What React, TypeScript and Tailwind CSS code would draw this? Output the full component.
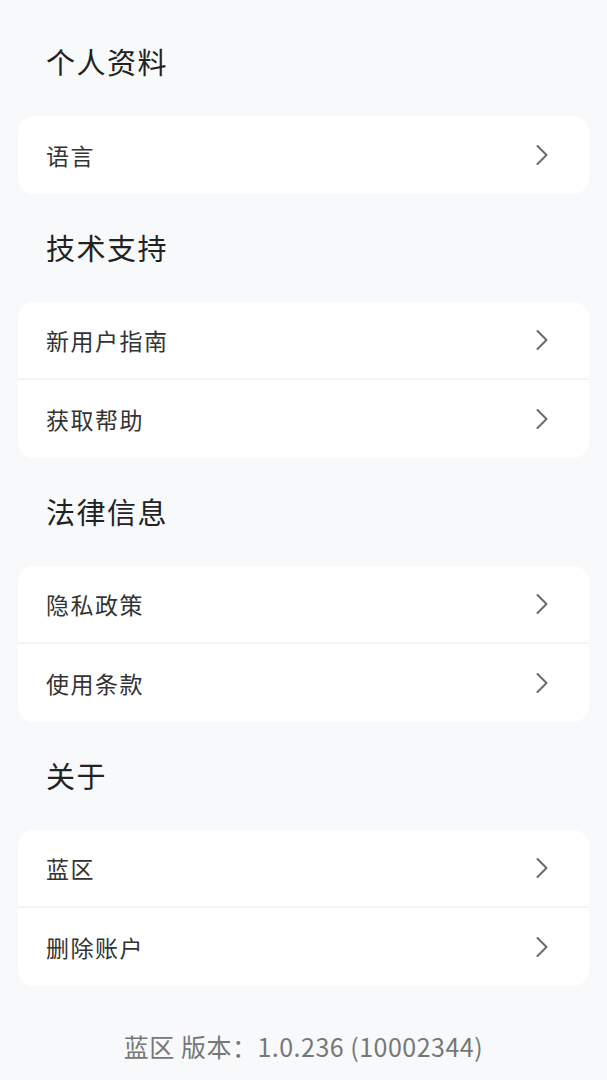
import { ChevronRight } from "lucide-react";

const sections = [
  { title: "个人资料", items: ["语言"] },
  { title: "技术支持", items: ["新用户指南", "获取帮助"] },
  { title: "法律信息", items: ["隐私政策", "使用条款"] },
  { title: "关于", items: ["蓝区", "删除账户"] },
];

const font = {
  fontFamily: '"Noto Sans CJK SC", "Noto Sans", sans-serif',
};

const SettingRow = ({ label }: { label: string }) => (
  <div className="flex h-[78px] items-center justify-between pl-7 pr-[29px]">
    <span className="text-[23px] tracking-[1.5px] text-[#333333]">{label}</span>
    <ChevronRight className="h-9 w-9 text-[#6b6b6b]" strokeWidth={1.4} />
  </div>
);

export default function App() {
  return (
    <div className="min-h-screen w-full bg-[#f8f9fb] px-[18px] pt-2" style={font}>
      {sections.map((section) => (
        <div key={section.title}>
          <div className="flex h-[108px] items-center pl-7">
            <h2 className="text-[29px] font-normal tracking-[1.5px] text-[#222222]">
              {section.title}
            </h2>
          </div>
          <div className="flex flex-col divide-y-2 divide-[#f3f4f6] overflow-hidden rounded-2xl bg-white">
            {section.items.map((item) => (
              <SettingRow key={item} label={item} />
            ))}
          </div>
        </div>
      ))}
      <div className="flex h-[122px] items-center justify-center">
        <span className="text-[25px] tracking-[0.5px] text-[#777777]">
          蓝区 版本：1.0.236 (10002344)
        </span>
      </div>
    </div>
  );
}
